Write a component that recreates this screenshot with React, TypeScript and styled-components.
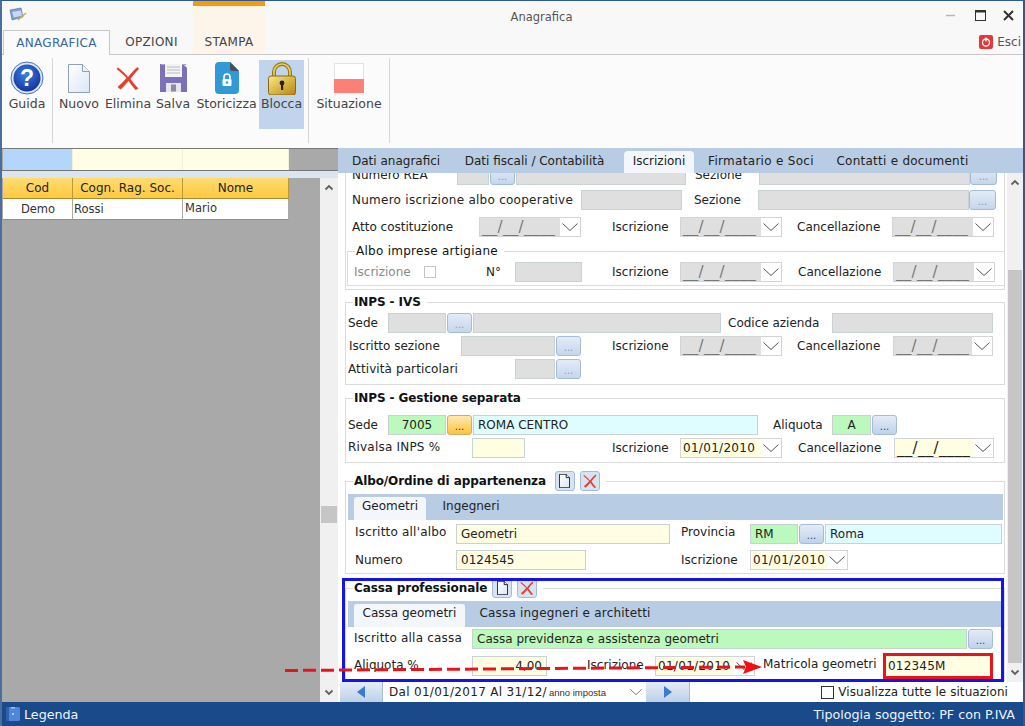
import React, { FC } from "react";
import styled, { createGlobalStyle, css } from "styled-components";

type Tone = "gray" | "green" | "cyan" | "yellow";

const toneColors: Record<Tone, string> = {
  gray: "#dfdfdf",
  green: "#bcf9bc",
  cyan: "#dffdff",
  yellow: "#fffde2",
};

const GlobalStyle = createGlobalStyle`
  html, body {
    margin: 0;
    padding: 0;
    background: #fff;
  }
  * {
    box-sizing: border-box;
  }
`;

const Window = styled.div`
  position: relative;
  width: 1025px;
  height: 726px;
  overflow: hidden;
  display: flex;
  flex-direction: column;
  background: #fafafa;
  border-top: 1px solid #2c5a96;
  border-left: 2px solid #4a6f9f;
  border-right: 2px solid #2c5a96;
  font-family: "DejaVu Sans", Verdana, sans-serif;
  font-size: 12px;
  color: #222;
`;

const RibbonHead = styled.div`
  position: relative;
  display: flex;
  flex-direction: column;
  background: #f8f8f8;
`;

const ContextBand = styled.div`
  position: absolute;
  left: 191px;
  top: -1px;
  width: 72px;
  height: 55px;
  background: #fdf5ea;
  border-top: 6px solid #f59b0b;
`;

const TitleBar = styled.div`
  position: relative;
  height: 27px;
  display: grid;
  grid-template-columns: 1fr auto 1fr;
  align-items: center;
  padding: 2px 9px 0 7px;
`;

const Title = styled.div`
  font-size: 11.5px;
  color: #555;
  padding: 3px 0 0 60px;
`;

const WindowControls = styled.div`
  display: flex;
  justify-content: flex-end;
  align-items: center;
  gap: 17px;
`;

const RibbonTabs = styled.div`
  position: relative;
  height: 27px;
  display: flex;
  align-items: flex-end;
  padding-left: 1px;
  border-bottom: 1px solid #c8c8c8;
`;

const RibbonTab = styled.div<{ $active?: boolean; $w: number }>`
  width: ${(p) => p.$w}px;
  height: 25px;
  display: flex;
  align-items: center;
  justify-content: center;
  font-size: 12px;
  letter-spacing: 0.3px;
  color: #444;
  ${(p) =>
    p.$active &&
    css`
      margin-bottom: -1px;
      background: #fbfbfb;
      color: #36689f;
      border: 1px solid #c8c8c8;
      border-bottom: 0;
    `}
`;

const ExitLink = styled.div`
  margin-left: auto;
  margin-right: 2px;
  height: 25px;
  display: flex;
  align-items: center;
  gap: 4px;
  font-size: 12px;
  color: #555;
`;

const Toolbar = styled.div`
  height: 93px;
  display: flex;
  align-items: flex-start;
  background: #fbfbfb;
  padding-top: 5px;
`;

const Tool = styled.div<{ $w: number; $active?: boolean; $ml?: number }>`
  width: ${(p) => p.$w}px;
  height: 69px;
  margin-left: ${(p) => p.$ml ?? 0}px;
  display: flex;
  flex-direction: column;
  align-items: center;
  background: ${(p) => (p.$active ? "#c0d4ee" : "transparent")};
  color: #444;
  font-size: 12.5px;
`;

const ToolIcon = styled.div`
  height: 36px;
  display: flex;
  align-items: center;
  justify-content: center;
`;

const ToolLabel = styled.div`
  line-height: 16px;
  white-space: nowrap;
`;

const Separator = styled.div<{ $ml?: number }>`
  width: 1px;
  height: 85px;
  margin-top: -2px;
  margin-left: ${(p) => p.$ml ?? 0}px;
  background: #d6d6d6;
`;

const Main = styled.div`
  flex: 1;
  display: flex;
  min-height: 0;
`;

const LeftPane = styled.div`
  width: 336px;
  display: flex;
  flex-direction: column;
  background: #a9a9a9;
`;

const FilterRow = styled.div`
  height: 23px;
  display: grid;
  grid-template-columns: 1px 70px 110px 106px;
  border-top: 1px solid #777;
  border-bottom: 1px solid #777;
`;

const FilterCell = styled.div<{ $on?: boolean }>`
  background: ${(p) => (p.$on ? "#b5d6fb" : "#fffde6")};
  border-right: 1px solid #f1efd8;
`;

const Band = styled.div`
  height: 7px;
  background: #dbe5f0;
`;

const GridArea = styled.div`
  flex: 1;
  display: flex;
  min-height: 0;
`;

const Grid = styled.div`
  flex: 1;
  padding-left: 1px;
`;

const GridRow = styled.div`
  display: grid;
  grid-template-columns: 70px 110px 106px;
  height: 21px;
`;

const HeadCell = styled.div`
  display: flex;
  align-items: center;
  justify-content: center;
  background: linear-gradient(#ffdc70, #ffc840);
  border-right: 1px solid #b89a3a;
  border-bottom: 1px solid #a88a30;
  color: #222;
  font-size: 12px;
`;

const BodyCell = styled.div<{ $center?: boolean; $raise?: boolean }>`
  display: flex;
  align-items: ${(p) => (p.$raise ? "flex-start" : "center")};
  justify-content: ${(p) => (p.$center ? "center" : "flex-start")};
  padding: ${(p) => (p.$raise ? "2px" : "0")} 0 0 ${(p) => (p.$raise ? 2 : 1)}px;
  background: #fff;
  border-right: 1px solid #a9a9a9;
  border-bottom: 1px solid #8f8f8f;
  font-size: 11.5px;
  color: #333;
`;

const ScrollTrack = styled.div<{ $w: number }>`
  position: relative;
  width: ${(p) => p.$w}px;
  flex-shrink: 0;
  display: flex;
  flex-direction: column;
  align-items: center;
  justify-content: space-between;
  background: #f0f0f0;
  color: #606060;
  padding: 6px 0;
`;

const ScrollThumb = styled.div<{ $top: number; $h: number }>`
  position: absolute;
  top: ${(p) => p.$top}px;
  left: 1px;
  right: 1px;
  height: ${(p) => p.$h}px;
  background: #c6c6c6;
`;

const RightPane = styled.div`
  flex: 1;
  display: flex;
  flex-direction: column;
  background: #fff;
  min-width: 0;
`;

const TabBar = styled.div`
  height: 25px;
  flex-shrink: 0;
  display: flex;
  align-items: flex-end;
  background: #b8cce4;
`;

const PageTab = styled.div<{ $active?: boolean; $ml: number; $w: number; $ls?: number }>`
  width: ${(p) => p.$w}px;
  margin-left: ${(p) => p.$ml}px;
  height: 22px;
  line-height: 20px;
  text-align: center;
  white-space: nowrap;
  letter-spacing: ${(p) => p.$ls ?? 0}px;
  color: #222;
  border-radius: 4px 4px 0 0;
  background: ${(p) => (p.$active ? "#f3f7fc" : "transparent")};
`;

const FormArea = styled.div`
  flex: 1;
  display: flex;
  min-height: 0;
`;

const ScrollArea = styled.div`
  position: relative;
  flex: 1;
  overflow: hidden;
`;

const FormContent = styled.div`
  margin-top: -13px;
  padding-left: 7px;
`;

const Group = styled.fieldset<{ $mt?: number; $ml?: number; $w?: number; $pb?: number }>`
  margin: ${(p) => p.$mt ?? 0}px 0 0 ${(p) => p.$ml ?? 0}px;
  padding: 0 0 ${(p) => p.$pb ?? 4}px 0;
  width: ${(p) => p.$w ?? 660}px;
  min-width: 0;
  border: 1px solid #dcdcdc;
`;

const Legend = styled.legend<{ $plain?: boolean; $tall?: boolean }>`
  display: flex;
  align-items: center;
  gap: 5px;
  height: ${(p) => (p.$tall ? 20 : 16)}px;
  margin-left: 7px;
  padding: 0 6px 0 1px;
  font-weight: ${(p) => (p.$plain ? 400 : 700)};
  font-size: 12px;
  color: #111;
  letter-spacing: ${(p) => (p.$plain ? 0.27 : -0.1)}px;
`;

const Row = styled.div<{ $mt: number; $pl: number }>`
  display: flex;
  align-items: center;
  height: 20px;
  margin-top: ${(p) => p.$mt}px;
  padding-left: ${(p) => p.$pl}px;
`;

const Label = styled.div<{ $w: number; $ml?: number; $muted?: boolean; $up?: number; $ls?: number }>`
  flex-shrink: 0;
  width: ${(p) => p.$w}px;
  margin-left: ${(p) => p.$ml ?? 0}px;
  margin-bottom: ${(p) => (p.$up ?? 0) * 2}px;
  white-space: nowrap;
  letter-spacing: ${(p) => p.$ls ?? 0}px;
  color: ${(p) => (p.$muted ? "#8a8a8a" : "#222")};
`;

const Input = styled.div<{
  $w: number;
  $tone: Tone;
  $ml?: number;
  $align?: string;
  $flag?: boolean;
}>`
  flex-shrink: 0;
  width: ${(p) => p.$w}px;
  height: 20px;
  margin-left: ${(p) => p.$ml ?? 0}px;
  padding: 0 4px;
  line-height: 18px;
  text-align: ${(p) => p.$align ?? "left"};
  white-space: nowrap;
  color: #222;
  background: ${(p) => toneColors[p.$tone]};
  border: 1px solid #c8d2d2;
  ${(p) =>
    p.$flag &&
    css`
      outline: 3px solid #e8141c;
      border: 0;
      padding-left: 2px;
      line-height: 20px;
      letter-spacing: 0.2px;
    `}
`;

const Dots = styled.div<{ $w?: number; $ml?: number; $tone?: "off" | "on" | "hot" }>`
  flex-shrink: 0;
  width: ${(p) => p.$w ?? 25}px;
  height: 20px;
  margin-left: ${(p) => p.$ml ?? 1}px;
  display: flex;
  align-items: center;
  justify-content: center;
  padding-top: 2px;
  font-size: 10px;
  border-radius: 3px;
  border: 1px solid #a4bcd8;
  ${(p) =>
    p.$tone === "hot"
      ? css`
          background: linear-gradient(#ffe9b0, #ffc23c);
          border-color: #d0b060;
          color: #333;
        `
      : p.$tone === "on"
      ? css`
          background: linear-gradient(#e3ecf7, #bfd2ea);
          color: #2b4a78;
        `
      : css`
          background: linear-gradient(#e3ecf7, #c5d6ec);
          color: #8c9cb4;
        `}
`;

const DateBox = styled.div<{ $w: number; $ml?: number }>`
  flex-shrink: 0;
  width: ${(p) => p.$w}px;
  height: 20px;
  margin-left: ${(p) => p.$ml ?? 0}px;
  display: flex;
  background: #fff;
  border: 1px solid #d4d4d4;
`;

const DateText = styled.div<{ $tone: Tone; $blank: boolean }>`
  flex: 1;
  padding-left: 2px;
  white-space: nowrap;
  overflow: hidden;
  line-height: 18px;
  letter-spacing: 0.3px;
  font-size: ${(p) => (p.$blank ? 15 : 12)}px;
  background: ${(p) => toneColors[p.$tone]};
  color: ${(p) => (p.$tone === "gray" ? "#777" : "#222")};
`;

const DateChevron = styled.div`
  width: 20px;
  display: flex;
  align-items: center;
  justify-content: center;
  color: #555;
`;

const Check = styled.div`
  width: 12px;
  height: 12px;
  flex-shrink: 0;
  background: #fff;
  border: 1px solid #c4c4c4;
`;

const IconButton = styled.div<{ $ml?: number }>`
  width: 20px;
  height: 20px;
  margin-left: ${(p) => p.$ml ?? 0}px;
  display: flex;
  align-items: center;
  justify-content: center;
  border-radius: 3px;
  background: #d6e3f3;
  border: 1px solid #a4bcd8;
`;

const SubTabs = styled.div`
  display: flex;
  align-items: flex-end;
  height: 26px;
  width: 655px;
  margin: 3px 0 0 2px;
  padding-left: 6px;
  background: #b8cce4;
`;

const SubTab = styled.div<{ $active?: boolean; $w: number; $ml?: number; $ls?: number }>`
  width: ${(p) => p.$w}px;
  margin-left: ${(p) => p.$ml ?? 0}px;
  height: 23px;
  line-height: 19px;
  text-align: center;
  white-space: nowrap;
  letter-spacing: ${(p) => p.$ls ?? 0}px;
  border-radius: 3px 3px 0 0;
  background: ${(p) => (p.$active ? "#f3f7fc" : "transparent")};
`;

const Highlight = styled.div`
  position: absolute;
  left: 4px;
  bottom: 0;
  width: 662px;
  height: 104px;
  border: 3px solid #1414e6;
  pointer-events: none;
`;

const BottomNav = styled.div`
  height: 20px;
  flex-shrink: 0;
  display: flex;
  align-items: stretch;
  padding-left: 2px;
  background: #fff;
`;

const NavButton = styled.div<{ $w: number }>`
  width: ${(p) => p.$w}px;
  display: flex;
  align-items: center;
  justify-content: center;
  background: linear-gradient(#e4edf7, #bdd0e8);
  border-right: 1px solid #a8bcd6;
`;

const Combo = styled.div`
  width: 261px;
  margin-left: 2px;
  padding: 0 4px;
  display: flex;
  align-items: center;
  white-space: nowrap;
  overflow: hidden;
  letter-spacing: 0.3px;
  background: #fff;
`;

const ComboHint = styled.span`
  margin-left: 2px;
  font-family: "Liberation Sans", Arial, sans-serif;
  font-size: 9.5px;
  letter-spacing: 0;
  color: #333;
`;

const ComboArrow = styled.span`
  margin-left: auto;
  display: flex;
  color: #555;
`;

const ShowAll = styled.div`
  margin-left: auto;
  padding-right: 15px;
  display: flex;
  align-items: center;
  gap: 4px;
  letter-spacing: 0.07px;
  color: #222;
`;

const ShowAllBox = styled.div`
  width: 13px;
  height: 13px;
  background: #fff;
  border: 1px solid #333;
`;

const StatusBar = styled.div`
  height: 24px;
  margin: 0 -2px;
  flex-shrink: 0;
  display: flex;
  align-items: center;
  gap: 4px;
  padding: 0 10px 0 6px;
  background: #1a4a8a;
  color: #f0f5fb;
  font-size: 12.7px;
`;

const StatusRight = styled.div`
  margin-left: auto;
`;

const ArrowOverlay = styled.svg`
  position: absolute;
  left: 281px;
  top: 656px;
  pointer-events: none;
`;

const Chevron: FC<{ w?: number }> = ({ w = 10 }) => (
  <svg width={w} height="8" viewBox="0 0 16 8" fill="none" stroke="currentColor" strokeWidth="1">
    <path d="M.5.500 8 7.500l7.500-7" />
  </svg>
);

const ScrollChevron: FC<{ up?: boolean }> = ({ up }) => (
  <svg width="10" height="7" viewBox="0 0 10 7" fill="none" stroke="currentColor" strokeWidth="1.8">
    <path d={up ? "M1.500 5.500 5 2l3.500 3.500" : "M1.500 1.500 5 5l3.500-3.500"} />
  </svg>
);

const BLANK_DATE = "__/__/____";

const DateField: FC<{ w: number; ml?: number; tone?: Tone; value?: string }> = ({
  w,
  ml,
  tone = "gray",
  value = BLANK_DATE,
}) => (
  <DateBox $w={w} $ml={ml}>
    <DateText $tone={tone} $blank={value === BLANK_DATE}>{value}</DateText>
    <DateChevron>
      <Chevron w={16} />
    </DateChevron>
  </DateBox>
);

const DocIcon: FC<{ w?: number; h?: number; dark?: boolean }> = ({ w = 22, h = 29, dark }) => (
  <svg width={w} height={h} viewBox="0 0 22 29">
    <defs>
      <linearGradient id="docFill" x1="0" y1="0" x2="1" y2="1">
        <stop offset="0" stopColor="#ffffff" />
        <stop offset="1" stopColor="#dbe6f6" />
      </linearGradient>
    </defs>
    <path d="M.5.500h14l7 7v21H.5z" fill="url(#docFill)" stroke={dark ? "#222" : "#8f9fb4"} strokeWidth={dark ? 2 : 1} />
    <path d="M14.500.500v7h7" fill="#eef2f8" stroke={dark ? "#222" : "#8f9fb4"} strokeWidth={dark ? 2 : 1} />
  </svg>
);

const CrossIcon: FC<{ size?: number }> = ({ size = 24 }) => (
  <svg width={size} height={size} viewBox="0 0 24 24">
    <path d="M2 1.500c5 4 8 7 10 9.500 3-3.500 6-7 9.500-10L23 3c-3.500 3.500-6.500 7-8.500 10 2.500 3.500 5 6.500 8 9.500l-3 1.500c-2.500-3-5-6-7-9-2.500 3-5 6-8 8.500L1.500 21c3.500-3 6.500-6 9-9C7.500 9 4.500 6 .5 3z" fill="#e5402e" />
  </svg>
);

const HelpIcon = () => (
  <svg width="34" height="34" viewBox="0 0 34 34">
    <defs>
      <radialGradient id="helpFill" cx="0.45" cy="0.35" r="0.7">
        <stop offset="0" stopColor="#3f7fe0" />
        <stop offset="1" stopColor="#0f2f9a" />
      </radialGradient>
    </defs>
    <circle cx="17" cy="17" r="16" fill="#dbe6f6" stroke="#4a72b8" />
    <circle cx="17" cy="17" r="13.500" fill="url(#helpFill)" />
    <text x="17" y="25" textAnchor="middle" fontFamily="Liberation Sans" fontWeight="700" fontSize="23" fill="#fff">?</text>
  </svg>
);

const FloppyIcon = () => (
  <svg width="27" height="28" viewBox="0 0 27 28">
    <path d="M0 0h23l4 4v24H0z" fill="#7d6fb8" />
    <path d="M1 0h25v1H1z" fill="#a99fd6" />
    <rect x="5" y="0" width="17" height="13" fill="#f4f4f4" />
    <path d="M7 3h13M7 6h13M7 9h13" stroke="#b8b8c8" />
    <rect x="6" y="19" width="15" height="9" fill="#e6e6ec" />
    <rect x="11" y="20.500" width="5" height="7" fill="#8d8aa4" />
  </svg>
);

const VaultDocIcon = () => (
  <svg width="24" height="32" viewBox="0 0 24 32">
    <path d="M4 0h11l9 9v19a4 4 0 0 1-4 4H4a4 4 0 0 1-4-4V4a4 4 0 0 1 4-4z" fill="#2f9ad6" />
    <path d="M15 0l9 9h-7a2 2 0 0 1-2-2z" fill="#45505e" />
    <path d="M9 17v-2a3 3 0 0 1 6 0v2" fill="none" stroke="#fff" strokeWidth="1.600" />
    <rect x="7.500" y="17" width="9" height="7" rx="1" fill="#fff" />
    <circle cx="12" cy="20.500" r="1.200" fill="#2f9ad6" />
  </svg>
);

const PadlockIcon = () => (
  <svg width="28" height="33" viewBox="0 0 28 33">
    <defs>
      <linearGradient id="lockBody" x1="0" y1="0" x2="1" y2="1">
        <stop offset="0" stopColor="#fbe88a" />
        <stop offset="1" stopColor="#b8860b" />
      </linearGradient>
    </defs>
    <path d="M6 15V10a8 8 0 0 1 16 0v5" fill="none" stroke="#9a7a10" strokeWidth="4" />
    <path d="M6 15V10a8 8 0 0 1 16 0v5" fill="none" stroke="#e8cf68" strokeWidth="1.600" />
    <rect x=".5" y="14" width="27" height="19" rx="2.500" fill="url(#lockBody)" stroke="#8a6a10" />
    <circle cx="14" cy="21" r="2.400" fill="#2a2208" />
    <rect x="13" y="21" width="2.200" height="7" fill="#2a2208" />
  </svg>
);

const StatusSwatch = () => (
  <svg width="30" height="30" viewBox="0 0 30 30">
    <rect x=".5" y=".5" width="29" height="29" fill="#fff" stroke="#e2e2e2" />
    <rect x="0" y="16" width="30" height="14" fill="#fd8077" />
  </svg>
);

const PowerIcon = () => (
  <svg width="14" height="14" viewBox="0 0 14 14">
    <rect width="14" height="14" rx="2" fill="#e23a3a" />
    <circle cx="7" cy="7.500" r="3.500" fill="none" stroke="#fff" strokeWidth="1.300" />
    <path d="M7 2.500v4" stroke="#fff" strokeWidth="1.300" />
  </svg>
);

const AppIcon = () => (
  <svg width="18" height="15" viewBox="0 0 18 15">
    <path d="M1 3l11-2 2 9-11 3z" fill="#7f9fd0" stroke="#4a6aa0" strokeWidth=".6" />
    <path d="M3 5l9-1.500 1 5-8 2z" fill="#c8daf2" />
    <path d="M9 13l8-7" stroke="#c9b24a" strokeWidth="1.500" />
  </svg>
);

const BookIcon = () => (
  <svg width="14" height="14" viewBox="0 0 14 14">
    <rect width="14" height="14" rx="1.500" fill="#4f86d8" />
    <rect x="0" y="0" width="3" height="14" fill="#2e5fae" />
    <circle cx="7" cy="7" r="1" fill="#cfe2fb" />
    <rect x="5" y="0" width="4" height="1.500" fill="#9cc0f0" />
  </svg>
);

const NavArrow: FC<{ left?: boolean }> = ({ left }) => (
  <svg width="8" height="12" viewBox="0 0 8 12">
    <path d={left ? "M8 0v12L0 6z" : "M0 0v12l8-6z"} fill="#3a7ad0" />
  </svg>
);

const Minimize = () => (
  <svg width="9" height="3" viewBox="0 0 9 3" style={{ marginRight: 3 }}>
    <path d="M0 1.500h9" stroke="#b8b8b8" strokeWidth="1.500" />
  </svg>
);

const Maximize = () => (
  <svg width="11" height="11" viewBox="0 0 11 11" fill="none" stroke="#333">
    <rect x=".5" y=".5" width="10" height="10" />
    <path d="M0 1.500h11" strokeWidth="2" />
  </svg>
);

const CloseX = () => (
  <svg width="11" height="11" viewBox="0 0 11 11" stroke="#333" strokeWidth="2">
    <path d="M1 1l9 9M10 1l-9 9" />
  </svg>
);

const GroupActions: FC<{ ml?: number }> = ({ ml }) => (
  <>
    <IconButton $ml={ml}>
      <DocIcon w={11} h={14} dark />
    </IconButton>
    <IconButton>
      <CrossIcon size={14} />
    </IconButton>
  </>
);

export default function App() {
  return (
    <Window>
      <GlobalStyle />
      <RibbonHead>
        <ContextBand />
        <TitleBar>
          <div>
            <AppIcon />
          </div>
          <Title>Anagrafica</Title>
          <WindowControls>
            <Minimize />
            <Maximize />
            <CloseX />
          </WindowControls>
        </TitleBar>
        <RibbonTabs>
          <RibbonTab $active $w={107}>ANAGRAFICA</RibbonTab>
          <RibbonTab $w={83}>OPZIONI</RibbonTab>
          <RibbonTab $w={72}>STAMPA</RibbonTab>
          <ExitLink>
            <PowerIcon />
            Esci
          </ExitLink>
        </RibbonTabs>
      </RibbonHead>

      <Toolbar>
        <Tool $w={50}>
          <ToolIcon><HelpIcon /></ToolIcon>
          <ToolLabel>Guida</ToolLabel>
        </Tool>
        <Separator />
        <Tool $w={52}>
          <ToolIcon><DocIcon /></ToolIcon>
          <ToolLabel>Nuovo</ToolLabel>
        </Tool>
        <Tool $w={46}>
          <ToolIcon><CrossIcon /></ToolIcon>
          <ToolLabel>Elimina</ToolLabel>
        </Tool>
        <Tool $w={44}>
          <ToolIcon><FloppyIcon /></ToolIcon>
          <ToolLabel>Salva</ToolLabel>
        </Tool>
        <Tool $w={63}>
          <ToolIcon><VaultDocIcon /></ToolIcon>
          <ToolLabel>Storicizza</ToolLabel>
        </Tool>
        <Tool $w={45} $ml={1} $active>
          <ToolIcon><PadlockIcon /></ToolIcon>
          <ToolLabel>Blocca</ToolLabel>
        </Tool>
        <Separator $ml={4} />
        <Tool $w={80}>
          <ToolIcon><StatusSwatch /></ToolIcon>
          <ToolLabel>Situazione</ToolLabel>
        </Tool>
        <Separator />
      </Toolbar>

      <Main>
        <LeftPane>
          <FilterRow>
            <div />
            <FilterCell $on />
            <FilterCell />
            <FilterCell />
          </FilterRow>
          <Band />
          <GridArea>
            <Grid>
              <GridRow>
                <HeadCell>Cod</HeadCell>
                <HeadCell>Cogn. Rag. Soc.</HeadCell>
                <HeadCell>Nome</HeadCell>
              </GridRow>
              <GridRow>
                <BodyCell $center>Demo</BodyCell>
                <BodyCell>Rossi</BodyCell>
                <BodyCell $raise>Mario</BodyCell>
              </GridRow>
            </Grid>
            <ScrollTrack $w={18}>
              <ScrollChevron up />
              <ScrollThumb $top={328} $h={17} />
              <ScrollChevron />
            </ScrollTrack>
          </GridArea>
        </LeftPane>

        <RightPane>
          <TabBar>
            <PageTab $ml={14} $w={87}>Dati anagrafici</PageTab>
            <PageTab $ml={25} $w={141}>Dati fiscali / Contabilità</PageTab>
            <PageTab $ml={19} $w={70} $active>Iscrizioni</PageTab>
            <PageTab $ml={14} $w={106} $ls={0.3}>Firmatario e Soci</PageTab>
            <PageTab $ml={22} $w={133} $ls={0.25}>Contatti e documenti</PageTab>
          </TabBar>

          <FormArea>
            <ScrollArea>
              <FormContent>
                <Group $pb={3}>
                  <Row $mt={4} $pl={6}>
                    <Label $w={105}>Numero REA</Label>
                    <Input $w={32} $tone="gray" />
                    <Dots>...</Dots>
                    <Input $w={170} $ml={1} $tone="gray" />
                    <Label $w={64} $ml={9}>Sezione</Label>
                    <Input $w={211} $tone="gray" />
                    <Dots $w={27} $ml={0}>...</Dots>
                  </Row>
                  <Row $mt={5} $pl={6}>
                    <Label $w={229} $ls={0.26}>Numero iscrizione albo cooperative</Label>
                    <Input $w={101} $tone="gray" />
                    <Label $w={64} $ml={12}>Sezione</Label>
                    <Input $w={211} $tone="gray" />
                    <Dots $w={27} $ml={0}>...</Dots>
                  </Row>
                  <Row $mt={7} $pl={6}>
                    <Label $w={127}>Atto costituzione</Label>
                    <DateField w={102} />
                    <Label $w={68} $ml={31}>Iscrizione</Label>
                    <DateField w={102} />
                    <Label $w={95} $ml={15}>Cancellazione</Label>
                    <DateField w={102} />
                  </Row>
                  <Group $mt={6} $ml={1} $w={658} $pb={3}>
                    <Legend $plain>Albo imprese artigiane</Legend>
                    <Row $mt={3} $pl={6}>
                      <Label $w={70} $muted>Iscrizione</Label>
                      <Check />
                      <Label $w={29} $ml={50}>N°</Label>
                      <Input $w={67} $tone="gray" />
                      <Label $w={68} $ml={30}>Iscrizione</Label>
                      <DateField w={102} />
                      <Label $w={95} $ml={16}>Cancellazione</Label>
                      <DateField w={102} />
                    </Row>
                  </Group>
                </Group>

                <Group $mt={4} $pb={5}>
                  <Legend>INPS - IVS</Legend>
                  <Row $mt={3} $pl={2}>
                    <Label $w={40}>Sede</Label>
                    <Input $w={58} $tone="gray" />
                    <Dots>...</Dots>
                    <Input $w={248} $ml={1} $tone="gray" />
                    <Label $w={104} $ml={7}>Codice azienda</Label>
                    <Input $w={161} $tone="gray" />
                  </Row>
                  <Row $mt={3} $pl={3}>
                    <Label $w={112}>Iscritto sezione</Label>
                    <Input $w={94} $tone="gray" />
                    <Dots>...</Dots>
                    <Label $w={68} $ml={31}>Iscrizione</Label>
                    <DateField w={102} />
                    <Label $w={96} $ml={15}>Cancellazione</Label>
                    <DateField w={100} />
                  </Row>
                  <Row $mt={3} $pl={2}>
                    <Label $w={167} $ls={0.1}>Attività particolari</Label>
                    <Input $w={40} $tone="gray" />
                    <Dots>...</Dots>
                  </Row>
                </Group>

                <Group $mt={5}>
                  <Legend>INPS - Gestione separata</Legend>
                  <Row $mt={9} $pl={2}>
                    <Label $w={40}>Sede</Label>
                    <Input $w={58} $tone="green" $align="center">7005</Input>
                    <Dots $tone="hot">...</Dots>
                    <Input $w={285} $ml={1} $tone="cyan">ROMA CENTRO</Input>
                    <Label $w={59} $ml={15}>Aliquota</Label>
                    <Input $w={39} $tone="green" $align="center">A</Input>
                    <Dots $tone="on">...</Dots>
                  </Row>
                  <Row $mt={3} $pl={2}>
                    <Label $w={124} $up={1} $ls={0.2}>Rivalsa INPS %</Label>
                    <Input $w={53} $tone="yellow" />
                    <Label $w={68} $ml={87}>Iscrizione</Label>
                    <DateField w={102} tone="yellow" value="01/01/2010" />
                    <Label $w={96} $ml={16}>Cancellazione</Label>
                    <DateField w={100} tone="yellow" />
                  </Row>
                </Group>

                <Group $mt={8} $pb={3}>
                  <Legend $tall>
                    Albo/Ordine di appartenenza
                    <GroupActions ml={4} />
                  </Legend>
                  <SubTabs>
                    <SubTab $w={72} $active>Geometri</SubTab>
                    <SubTab $w={62} $ml={14}>Ingegneri</SubTab>
                  </SubTabs>
                  <Row $mt={4} $pl={9}>
                    <Label $w={101} $up={2} $ls={0.2}>Iscritto all'albo</Label>
                    <Input $w={214} $tone="yellow">Geometri</Input>
                    <Label $w={69} $ml={11} $up={2}>Provincia</Label>
                    <Input $w={48} $tone="green">RM</Input>
                    <Dots $tone="on">...</Dots>
                    <Input $w={177} $ml={1} $tone="cyan">Roma</Input>
                  </Row>
                  <Row $mt={6} $pl={9}>
                    <Label $w={101}>Numero</Label>
                    <Input $w={130} $tone="yellow">0124545</Input>
                    <Label $w={69} $ml={95}>Iscrizione</Label>
                    <DateField w={98} tone="yellow" value="01/01/2010" />
                  </Row>
                </Group>

                <Group $mt={4}>
                  <Legend $tall>
                    Cassa professionale
                    <GroupActions />
                  </Legend>
                  <SubTabs>
                    <SubTab $w={111} $active>Cassa geometri</SubTab>
                    <SubTab $w={172} $ml={14} $ls={0.2}>Cassa ingegneri e architetti</SubTab>
                  </SubTabs>
                  <Row $mt={2} $pl={8}>
                    <Label $w={118} $up={1} $ls={0.2}>Iscritto alla cassa</Label>
                    <Input $w={495} $tone="green">Cassa previdenza e assistenza geometri</Input>
                    <Dots $tone="on">...</Dots>
                  </Row>
                  <Row $mt={7} $pl={8}>
                    <Label $w={118} $up={1}>Aliquota %</Label>
                    <Input $w={75} $tone="yellow" $align="right">4,00</Input>
                    <Label $w={68} $ml={40} $up={1}>Iscrizione</Label>
                    <DateField w={100} tone="yellow" value="01/01/2010" />
                    <Label $w={120} $ml={8} $up={2}>Matricola geometri</Label>
                    <Input $w={104} $ml={3} $tone="yellow" $flag>012345M</Input>
                  </Row>
                </Group>
              </FormContent>
              <Highlight />
            </ScrollArea>
            <ScrollTrack $w={16}>
              <ScrollChevron up />
              <ScrollThumb $top={97} $h={393} />
              <ScrollChevron />
            </ScrollTrack>
          </FormArea>

          <BottomNav>
            <NavButton $w={43}><NavArrow left /></NavButton>
            <Combo>
              Dal 01/01/2017 Al 31/12/
              <ComboHint>anno imposta</ComboHint>
              <ComboArrow><Chevron w={12} /></ComboArrow>
            </Combo>
            <NavButton $w={44}><NavArrow /></NavButton>
            <ShowAll>
              <ShowAllBox />
              Visualizza tutte le situazioni
            </ShowAll>
          </BottomNav>
        </RightPane>
      </Main>

      <StatusBar>
        <BookIcon />
        Legenda
        <StatusRight>Tipologia soggetto: PF con P.IVA</StatusRight>
      </StatusBar>

      <ArrowOverlay width="482" height="22" viewBox="0 0 482 22">
        <path d="M2 13.500 462 10" stroke="#e8141c" strokeWidth="3" strokeDasharray="13 5" fill="none" />
        <path d="M460 3l19 7-19 7 3-7z" fill="#f01018" />
      </ArrowOverlay>
    </Window>
  );
}
